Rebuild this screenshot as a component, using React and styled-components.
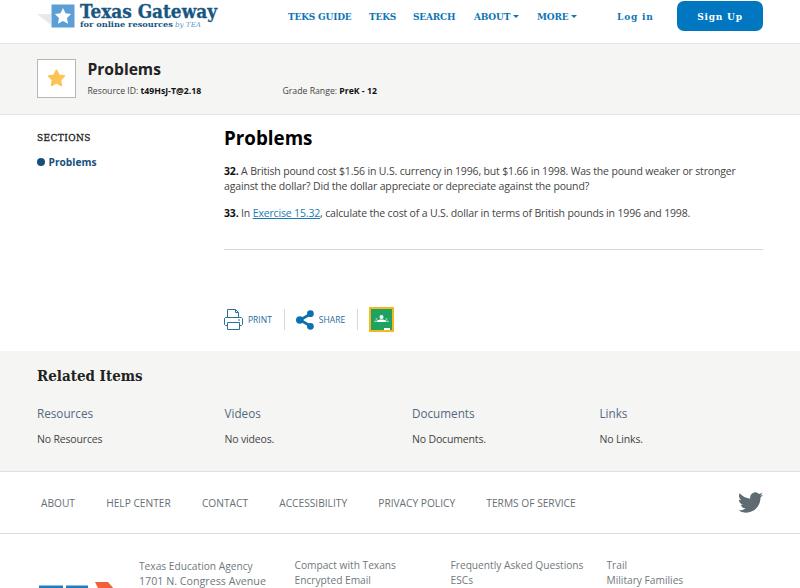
import React from "react";
import styled, { createGlobalStyle } from "styled-components";

const slab = `"DejaVu Serif Condensed", "DejaVu Serif", serif`;

const GlobalStyle = createGlobalStyle`
	* {
		box-sizing: border-box;
	}
	html {
		overflow: hidden;
	}
	body {
		margin: 0;
		height: 588px;
		overflow: hidden;
		background: #fff;
		color: #444;
		font-family: "Open Sans", sans-serif;
		font-size: 10.5px;
	}
	h1, h2, h3, p {
		margin: 0;
	}
	a {
		color: inherit;
		text-decoration: none;
	}
`;

const Header = styled.header`
	display: flex;
	justify-content: space-between;
	height: 44px;
	padding: 0 37px 0 36px;
	border-bottom: 1px solid #e3e4e3;
`;

const Logo = styled.svg`
	display: block;
	width: 184px;
	height: 32px;
	font-family: ${slab};
	font-weight: bold;
`;

const Nav = styled.nav`
	display: grid;
	grid-template-columns: 81px 44px 61px 63px 80px 60px 86px;
	height: 32px;
	align-items: center;
	color: #0e76b6;
	font-family: ${slab};
	font-size: 10px;
	font-weight: bold;
	white-space: nowrap;
`;

const NavLink = styled.a`
	display: flex;
	align-items: center;
	letter-spacing: ${(props) => props.$spacing || "-0.2px"};
`;

const Caret = styled.span`
	margin-left: 3px;
	border: 3px solid transparent;
	border-top-color: #0e76b6;
	border-bottom: 0;
`;

const SignUp = styled.button`
	height: 30px;
	padding: 0;
	border: 0;
	border-radius: 7px;
	background: #0077c0;
	color: #fff;
	font: bold 10px ${slab};
	letter-spacing: 0.8px;
`;

const TitleBand = styled.section`
	display: flex;
	gap: 12px;
	height: 71px;
	padding: 15px 37px 0 36.5px;
	border-bottom: 1px solid #e1e2e1;
	background: #f5f5f3;
`;

const StarBox = styled.div`
	display: flex;
	align-items: center;
	justify-content: center;
	width: 39px;
	height: 39px;
	border: 1px solid #b5b8b8;
	background: #fff;
`;

const BandTitle = styled.h1`
	color: #222;
	font-size: 15.6px;
	line-height: 20px;
`;

const Meta = styled.div`
	display: grid;
	grid-template-columns: 195px 200px;
	margin-top: 5px;
	font-size: 8.7px;
	line-height: 14px;
	b {
		color: #111;
	}
`;

const Main = styled.main`
	display: grid;
	grid-template-columns: 187px 1fr;
	height: 236px;
	padding: 0 37px;
`;

const SideTitle = styled.h3`
	margin-top: 15px;
	color: #222;
	font-family: ${slab};
	font-size: 10px;
	font-weight: normal;
	letter-spacing: 0.4px;
	line-height: 16px;
	-webkit-text-stroke: 0.3px #222;
`;

const SideLink = styled.a`
	display: flex;
	align-items: center;
	gap: 3.5px;
	margin-top: 8px;
	color: #15507c;
	font-size: 10.2px;
	font-weight: bold;
	line-height: 16px;
	&::before {
		content: "";
		width: 8px;
		height: 8px;
		border-radius: 50%;
		background: #15507c;
	}
`;

const ArticleTitle = styled.h2`
	margin-top: 10px;
	color: #000;
	font-size: 18.8px;
	line-height: 26px;
`;

const Problem = styled.p`
	margin-top: 12px;
	letter-spacing: -0.16px;
	line-height: 15px;
	white-space: nowrap;
	b {
		color: #111;
	}
	a {
		color: #1a7bb5;
		text-decoration: underline;
	}
`;

const Problems = styled.div`
	height: 99px;
	padding-top: 1px;
	border-bottom: 1px solid #d3d9da;
`;

const Actions = styled.div`
	display: flex;
	align-items: center;
	height: 25px;
	margin-top: 57px;
	color: #1c6b9e;
	font-size: 8.5px;
`;

const Action = styled.a`
	display: flex;
	align-items: center;
	gap: 5px;
	height: 21px;
	margin-right: 11px;
	padding-right: 12px;
	border-right: 1px solid #d5d9dc;
`;

const Related = styled.section`
	height: 121px;
	padding: 15px 37px 0;
	border-bottom: 1px solid #dedfde;
	background: #f5f5f3;
`;

const RelatedTitle = styled.h2`
	color: #222;
	font-family: ${slab};
	font-size: 15px;
	line-height: 20px;
`;

const RelatedGrid = styled.div`
	display: grid;
	grid-template-columns: repeat(4, 187.5px);
	margin-top: 18px;
	h3 {
		color: #52697e;
		font-size: 11.7px;
		font-weight: normal;
		line-height: 18px;
	}
	p {
		margin-top: 9px;
		letter-spacing: -0.16px;
		line-height: 16px;
	}
`;

const FooterNav = styled.nav`
	display: flex;
	align-items: center;
	gap: 31.2px;
	height: 62px;
	padding: 0 37px 0 41px;
	border-bottom: 1px solid #dddfdf;
	color: #666f74;
	font-size: 10.2px;
	svg {
		margin-left: auto;
	}
`;

const Footer = styled.footer`
	display: grid;
	grid-template-columns: 102px 155.5px 156px 156px 1fr;
	height: 54px;
	padding: 24px 37px 0;
	overflow: hidden;
	color: #70787d;
	font-size: 10.2px;
	line-height: 15px;
	white-space: nowrap;
`;

const Address = styled.div`
	padding-top: 1px;
	div + div {
		font-size: 10.7px;
	}
`;

const TeaLogo = styled.svg`
	display: block;
	margin-top: 23px;
`;

const related = [
	["Resources", "No Resources"],
	["Videos", "No videos."],
	["Documents", "No Documents."],
	["Links", "No Links."],
];

const footerLinks = [
	"ABOUT",
	"HELP CENTER",
	"CONTACT",
	"ACCESSIBILITY",
	"PRIVACY POLICY",
	"TERMS OF SERVICE",
];

const TexasGatewayLogo = () => (
	<Logo viewBox="0 0 184 32">
		<path d="M1 14h14v11z" fill="#e3ebef" />
		<path d="M15.500 4.500h23v23h-23z" fill="#5b9fd6" />
		<path
			d="M27 8l2.500 5.300 5.700.7-4.200 4 1.100 5.700-5.100-2.800-5.100 2.800 1.100-5.700-4.200-4 5.700-.7z"
			fill="#fff"
		/>
		<text
			x="44"
			y="18"
			fontSize="18"
			fill="#175681"
			stroke="#175681"
			strokeWidth=".3"
			textLength="137"
			lengthAdjust="spacingAndGlyphs"
		>
			Texas Gateway
		</text>
		<text x="44" y="27" fontSize="7.500" fill="#175681" textLength="93" lengthAdjust="spacingAndGlyphs">
			for online resources
		</text>
		<text
			x="139"
			y="27"
			fontSize="7"
			fontStyle="italic"
			fontWeight="normal"
			fill="#5d9ac4"
			textLength="26"
			lengthAdjust="spacingAndGlyphs"
		>
			by TEA
		</text>
	</Logo>
);

const PrintIcon = () => (
	<svg width="19" height="21" viewBox="0 0 19 21" fill="#fff" stroke="#2b6f9d">
		<path d="M3.500 8.500V.5h8l3 3v5M11.500.5v3h3" />
		<path d="M3.500 16.500h-2l-1-1v-6l1-1h16l1 1v6l-1 1h-2" />
		<path d="M3.500 13.500h12v7h-12zM14 11h2" />
	</svg>
);

const ShareIcon = () => (
	<svg width="18" height="20" viewBox="0 0 18 20" fill="#0d70b1">
		<path d="M14.500 4L4 10l10.500 6" fill="none" stroke="#0d70b1" strokeWidth="2.600" />
		<circle cx="14.400" cy="3.700" r="3.400" />
		<circle cx="3.800" cy="10" r="3.800" />
		<circle cx="14.400" cy="16.300" r="3.400" />
	</svg>
);

const ClassroomIcon = () => (
	<svg width="25" height="25" viewBox="0 0 25 25">
		<path d="M0 0h25v25H0z" fill="#f4b921" />
		<path d="M2 2h21v21H2z" fill="#1da261" />
		<circle cx="12.500" cy="10" r="2" fill="#fff" />
		<path d="M8 15v-1c0-2 9-2 9 0v1z" fill="#fff" />
		<circle cx="7.500" cy="12" r="1" fill="#8ed1ae" />
		<circle cx="17.500" cy="12" r="1" fill="#8ed1ae" />
		<path d="M5 15v-.6c0-1 3-1.200 3-.3v.9zM17 15v-.8c0-1 3-.7 3 .2v.6z" fill="#8ed1ae" />
		<path d="M15 21h6v2h-6z" fill="#fff" />
	</svg>
);

const TwitterIcon = () => (
	<svg width="25" height="25" viewBox="0 0 24 24" fill="#5e6b73">
		<path d="M23.950 4.570a10 10 0 0 1-2.820.77 4.960 4.960 0 0 0 2.160-2.720c-.95.55-2 .96-3.120 1.180a4.920 4.920 0 0 0-8.380 4.480C7.690 8.090 4.070 6.130 1.640 3.160a4.900 4.900 0 0 0 1.520 6.570 4.900 4.900 0 0 1-2.230-.61v.06a4.920 4.920 0 0 0 3.950 4.830 5 5 0 0 1-2.210.08 4.940 4.940 0 0 0 4.600 3.420A9.870 9.870 0 0 1 0 19.540a14 14 0 0 0 7.550 2.210c9.050 0 14-7.500 14-13.980 0-.21 0-.42-.02-.63a9.940 9.940 0 0 0 2.420-2.570z" />
	</svg>
);

const App = () => {
	return (
		<>
			<GlobalStyle />
			<Header>
				<TexasGatewayLogo />
				<Nav>
					<NavLink>TEKS GUIDE</NavLink>
					<NavLink>TEKS</NavLink>
					<NavLink>SEARCH</NavLink>
					<NavLink>
						ABOUT
						<Caret />
					</NavLink>
					<NavLink>
						MORE
						<Caret />
					</NavLink>
					<NavLink $spacing="0.8px">Log in</NavLink>
					<SignUp>Sign Up</SignUp>
				</Nav>
			</Header>
			<TitleBand>
				<StarBox>
					<svg width="19" height="19" viewBox="0 0 19 19">
						<path
							d="M9.500 1.200l2.500 5 5.500.8-4 3.900 1 5.600-5-2.600-5 2.600 1-5.600-4-3.900 5.500-.8z"
							fill="#fbc556"
							stroke="#fbc556"
							strokeWidth="1.500"
							strokeLinejoin="round"
						/>
					</svg>
				</StarBox>
				<div>
					<BandTitle>Problems</BandTitle>
					<Meta>
						<span>
							Resource ID: <b>t49HsJ-T@2.18</b>
						</span>
						<span>
							Grade Range: <b>PreK - 12</b>
						</span>
					</Meta>
				</div>
			</TitleBand>
			<Main>
				<aside>
					<SideTitle>SECTIONS</SideTitle>
					<SideLink>Problems</SideLink>
				</aside>
				<article>
					<ArticleTitle>Problems</ArticleTitle>
					<Problems>
						<Problem>
							<b>32.</b> A British pound cost $1.56 in U.S. currency in 1996, but $1.66 in 1998. Was the
							pound weaker or stronger
							<br />
							against the dollar? Did the dollar appreciate or depreciate against the pound?
						</Problem>
						<Problem>
							<b>33.</b> In <a>Exercise 15.32</a>, calculate the cost of a U.S. dollar in terms of
							British pounds in 1996 and 1998.
						</Problem>
					</Problems>
					<Actions>
						<Action>
							<PrintIcon />
							PRINT
						</Action>
						<Action>
							<ShareIcon />
							SHARE
						</Action>
						<ClassroomIcon />
					</Actions>
				</article>
			</Main>
			<Related>
				<RelatedTitle>Related Items</RelatedTitle>
				<RelatedGrid>
					{related.map(([title, text]) => (
						<div key={title}>
							<h3>{title}</h3>
							<p>{text}</p>
						</div>
					))}
				</RelatedGrid>
			</Related>
			<FooterNav>
				{footerLinks.map((link) => (
					<a key={link}>{link}</a>
				))}
				<TwitterIcon />
			</FooterNav>
			<Footer>
				<TeaLogo width="80" height="20" viewBox="0 0 80 20">
					<path d="M2 4.500h24V20H17v-9H2zM29 4.500h22V11H38v9h-9z" fill="#1c7fc4" />
					<path d="M58 1h13l7 8v11H58l4-11z" fill="#f1603a" />
				</TeaLogo>
				<Address>
					<div>Texas Education Agency</div>
					<div>1701 N. Congress Avenue</div>
				</Address>
				<div>
					<div>Compact with Texans</div>
					<div>Encrypted Email</div>
				</div>
				<div>
					<div>Frequently Asked Questions</div>
					<div>ESCs</div>
				</div>
				<div>
					<div>Trail</div>
					<div>Military Families</div>
				</div>
			</Footer>
		</>
	);
};

export default App;
